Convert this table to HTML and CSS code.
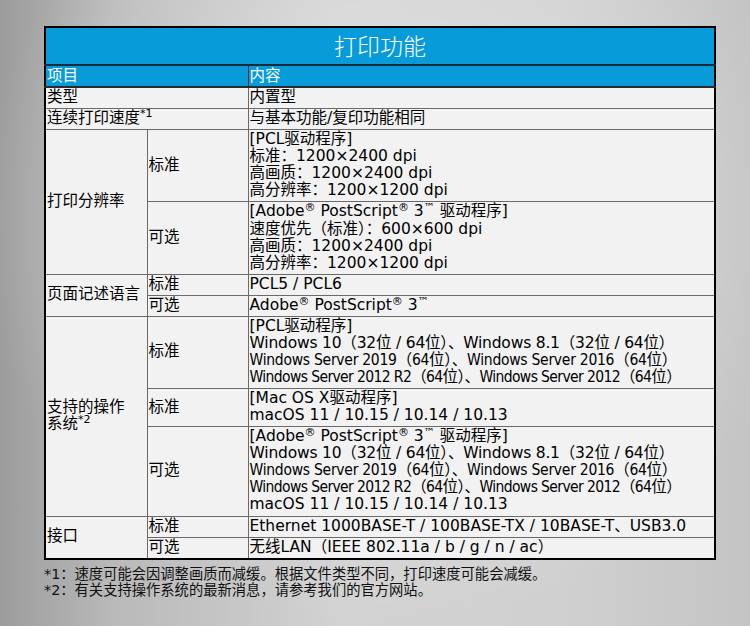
FILE: index.html
```html
<!DOCTYPE html>
<html lang="zh-CN">
<head>
<meta charset="utf-8">
<link rel="stylesheet" href="styles.css">
</head>
<body>
<div class="page">
  <table class="spec">
    <colgroup>
      <col class="c1"><col class="c2"><col class="c3">
    </colgroup>
    <tr class="title"><td colspan="3">打印功能</td></tr>
    <tr class="head"><td colspan="2">项目</td><td>内容</td></tr>
    <tr><td colspan="2">类型</td><td>内置型</td></tr>
    <tr><td colspan="2">连续打印速度<sup class="note">*1</sup></td><td>与基本功能/复印功能相同</td></tr>
    <tr>
      <td rowspan="2">打印分辨率</td><td>标准</td>
      <td>[PCL驱动程序]<br>标准：1200×2400 dpi<br>高画质：1200×2400 dpi<br>高分辨率：1200×1200 dpi</td>
    </tr>
    <tr>
      <td>可选</td>
      <td>[Adobe<sup class="r">®</sup> PostScript<sup class="r">®</sup> 3<sup class="r">™</sup> 驱动程序]<br>速度优先（标准）：600×600 dpi<br>高画质：1200×2400 dpi<br>高分辨率：1200×1200 dpi</td>
    </tr>
    <tr><td rowspan="2">页面记述语言</td><td>标准</td><td>PCL5 / PCL6</td></tr>
    <tr><td>可选</td><td>Adobe<sup class="r">®</sup> PostScript<sup class="r">®</sup> 3<sup class="r">™</sup></td></tr>
    <tr>
      <td rowspan="3">支持的操作<br>系统<sup class="note">*2</sup></td><td>标准</td>
      <td>[PCL驱动程序]<br><span class="n1">Windows 10（32位 / 64位）、Windows 8.1（32位 / 64位）</span><br><span class="n2">Windows Server 2019（64位）、Windows Server 2016（64位）</span><br><span class="n3">Windows Server 2012 R2（64位）、Windows Server 2012（64位）</span></td>
    </tr>
    <tr><td>标准</td><td>[Mac OS X驱动程序]<br>macOS 11 / 10.15 / 10.14 / 10.13</td></tr>
    <tr>
      <td>可选</td>
      <td>[Adobe<sup class="r">®</sup> PostScript<sup class="r">®</sup> 3<sup class="r">™</sup> 驱动程序]<br><span class="n1">Windows 10（32位 / 64位）、Windows 8.1（32位 / 64位）</span><br><span class="n2">Windows Server 2019（64位）、Windows Server 2016（64位）</span><br><span class="n3">Windows Server 2012 R2（64位）、Windows Server 2012（64位）</span><br>macOS 11 / 10.15 / 10.14 / 10.13</td>
    </tr>
    <tr><td rowspan="2">接口</td><td>标准</td><td>Ethernet 1000BASE-T / 100BASE-TX / 10BASE-T、USB3.0</td></tr>
    <tr><td>可选</td><td>无线LAN（IEEE 802.11a / b / g / n / ac）</td></tr>
  </table>
  <div class="notes">
    <p>*1：速度可能会因调整画质而减缓。根据文件类型不同，打印速度可能会减缓。</p>
    <p>*2：有关支持操作系统的最新消息，请参考我们的官方网站。</p>
  </div>
</div>
</body>
</html>
```
FILE: styles.css
```css
html, body {
  margin: 0;
  padding: 0;
}
body {
  width: 750px;
  height: 626px;
  overflow: hidden;
  background:
    radial-gradient(ellipse 55% 65% at 52% 35%, rgba(228,228,228,0.9), rgba(228,228,228,0) 100%),
    linear-gradient(to right, #9c9c9c 0%, #b9b9b9 15%, #d2d2d2 45%, #d0d0d0 75%, #c4c4c4 100%);
  font-family: "DejaVu Sans", "Noto Sans CJK SC", sans-serif;
  color: #000;
}
.page {
  padding: 26px 0 0 44px;
}
.spec {
  width: 670px;
  border-collapse: collapse;
  table-layout: fixed;
  border: 2px solid #000;
  background: #f2f2f2;
  font-size: 15.5px;
  line-height: 17.07px;
}
.c1 { width: 102px; }
.c2 { width: 101px; }
.c3 { width: 467px; }
.spec td {
  border: 1px solid #6a6a6a;
  padding: 1px 2px 2px 1px;
  vertical-align: middle;
  white-space: nowrap;
}
.spec tr.title td {
  background: #089bd9;
  color: #fff;
  text-align: center;
  font-family: "Noto Sans CJK SC", sans-serif;
  font-size: 23px;
  font-weight: 300;
  height: 36px;
  padding: 0;
  border: 2px solid #000;
  border-bottom: 2px solid #1a2a3a;
}
.spec tr.head td {
  background: #089bd9;
  color: #fff;
  border-color: #2a2a2a;
  border-bottom: 2px solid #2a2a2a;
  padding-top: 2px;
  padding-bottom: 1px;
}
.note {
  font-size: 11px;
  vertical-align: 6px;
  line-height: 0;
}
.r {
  font-size: 11px;
  vertical-align: 5px;
  line-height: 0;
}
.n1 {
  letter-spacing: -0.2px;
}
.n2 {
  font-family: "DejaVu Sans Condensed", "Noto Sans CJK SC", sans-serif;
  letter-spacing: -0.27px;
}
.n3 {
  font-family: "DejaVu Sans Condensed", "Noto Sans CJK SC", sans-serif;
  letter-spacing: -0.62px;
}
.notes {
  padding-top: 6px;
  font-size: 14.3px;
  line-height: 16px;
  color: #111;
}
.notes p {
  margin: 0;
}
```
